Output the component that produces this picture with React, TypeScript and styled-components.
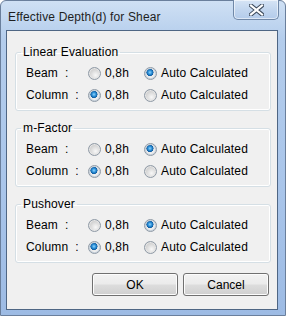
import React from "react";
import styled, { createGlobalStyle } from "styled-components";

const GlobalStyle = createGlobalStyle`
    html, body {
        margin: 0;
        padding: 0;
        background: #ffffff;
    }
    body {
        font-family: "Liberation Sans", Arial, sans-serif;
        font-size: 12px;
        color: #000000;
    }
`;

const Frame = styled.div`
    width: 286px;
    height: 316px;
    box-sizing: border-box;
    border: 1px solid #6a7f9c;
    border-radius: 6px 6px 0 0;
    background: linear-gradient(#cfe0f4, #b4cdec 12%, #a9c5ea 60%, #9dbbe4);
    display: flex;
    flex-direction: column;
    padding: 0 7px 5px 5px;
`;

const TitleBar = styled.div`
    height: 29px;
    display: flex;
    align-items: flex-start;
    justify-content: space-between;
`;

const Title = styled.span`
    font-size: 12px;
    margin-top: 9px;
    margin-left: 2px;
    color: #1e1e1e;
    letter-spacing: 0.15px;
`;

const CloseButton = styled.div`
    width: 46px;
    height: 20px;
    margin-top: -1px;
    margin-right: -1px;
    box-sizing: border-box;
    border: 1px solid #7088a8;
    border-top: none;
    border-radius: 0 0 5px 5px;
    background: linear-gradient(#d6e4f5, #c2d6ef 50%, #b3cbea);
    box-shadow: inset 0 0 0 1px rgba(255, 255, 255, 0.55);
    display: flex;
    align-items: center;
    justify-content: center;
`;

const Client = styled.div`
    flex: 1;
    border: 1px solid #4f6684;
    background: #f0f0f0;
    display: flex;
    flex-direction: column;
    padding: 0 6px 0 8px;
`;

const Group = styled.fieldset<{ $first?: boolean }>`
    margin: ${(p) => (p.$first ? "14px" : "10px")} 0 0 0;
    padding: 3px 4px 4px 10px;
    border: 1px solid #d5dfe5;
    border-radius: 3px;
    box-shadow: inset 0 0 0 1px #ffffff;
    min-width: 0;
`;

const Legend = styled.legend`
    padding: 0 2px;
    margin-left: -5px;
    line-height: 14px;
    font-size: 12px;
    letter-spacing: 0.15px;
`;

const Row = styled.div`
    display: grid;
    grid-template-columns: 62px 56px auto;
    align-items: center;
    height: 22px;
    letter-spacing: 0.15px;
`;

const RowLabel = styled.span`
    white-space: pre;
`;

const Choice = styled.label`
    display: flex;
    align-items: center;
    gap: 4px;
`;

const RadioDot = styled.span<{ $checked?: boolean }>`
    width: 13px;
    height: 13px;
    box-sizing: border-box;
    border-radius: 50%;
    border: 1px solid #8f9aa6;
    background: ${(p) =>
        p.$checked
            ? "radial-gradient(circle at 45% 40%, #8fd4ff 0, #2b8fd6 22%, #0d5aa0 38%, #e8e8e8 42%, #f6f6f6 70%)"
            : "radial-gradient(circle at 60% 65%, #f8f8f8 0, #dcdcdc 45%, #c9c9c9 75%)"};
    box-shadow: inset 0 0 0 1px ${(p) => (p.$checked ? "#c8d2dc" : "#e6e6e6")};
`;

const ButtonRow = styled.div`
    display: flex;
    justify-content: flex-end;
    gap: 5px;
    margin-top: 10px;
    padding-right: 2px;
`;

const Button = styled.button`
    width: 86px;
    height: 23px;
    border: 1px solid #707070;
    border-radius: 3px;
    background: linear-gradient(#f2f2f2, #ebebeb 48%, #dddddd 52%, #cfcfcf);
    box-shadow: inset 0 0 0 1px #fcfcfc;
    font-family: "Liberation Sans", Arial, sans-serif;
    font-size: 12px;
    color: #000000;
    padding: 0;
`;

const CloseGlyph = () => (
    <svg width="15" height="12" viewBox="0 0 15 12">
        <path
            d="M2 1.5 L13 10.5 M13 1.5 L2 10.5"
            stroke="#3c4a5c"
            strokeWidth="4.2"
            strokeLinecap="square"
        />
        <path
            d="M2 1.5 L13 10.5 M13 1.5 L2 10.5"
            stroke="#ffffff"
            strokeWidth="2.2"
            strokeLinecap="square"
        />
    </svg>
);

type Section = { title: string; beamAuto: boolean; columnAuto: boolean };

const sections: Section[] = [
    { title: "Linear Evaluation", beamAuto: true, columnAuto: false },
    { title: "m-Factor", beamAuto: true, columnAuto: false },
    { title: "Pushover", beamAuto: true, columnAuto: false },
];

const OptionRow = ({ label, auto }: { label: string; auto: boolean }) => (
    <Row>
        <RowLabel>{label}</RowLabel>
        <Choice>
            <RadioDot $checked={!auto} />
            0,8h
        </Choice>
        <Choice>
            <RadioDot $checked={auto} />
            Auto Calculated
        </Choice>
    </Row>
);

export default function App() {
    return (
        <>
            <GlobalStyle />
            <Frame>
                <TitleBar>
                    <Title>Effective Depth(d) for Shear</Title>
                    <CloseButton>
                        <CloseGlyph />
                    </CloseButton>
                </TitleBar>
                <Client>
                    {sections.map((s, i) => (
                        <Group key={s.title} $first={i === 0}>
                            <Legend>{s.title}</Legend>
                            <OptionRow label="Beam  :" auto={s.beamAuto} />
                            <OptionRow label="Column  :" auto={s.columnAuto} />
                        </Group>
                    ))}
                    <ButtonRow>
                        <Button>OK</Button>
                        <Button>Cancel</Button>
                    </ButtonRow>
                </Client>
            </Frame>
        </>
    );
}
